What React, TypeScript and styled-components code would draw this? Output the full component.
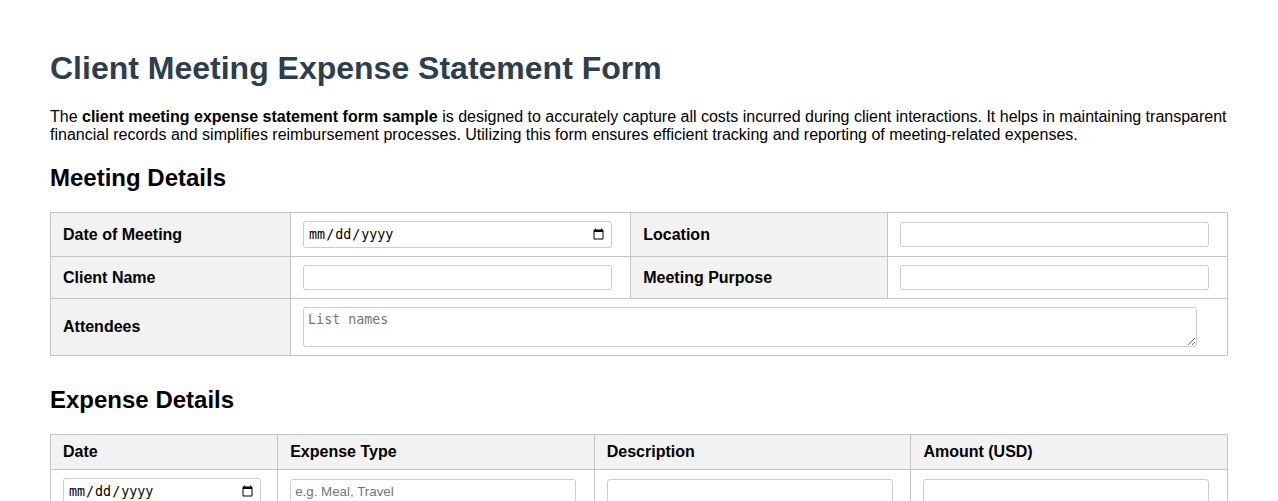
import React from "react";
import styled, { createGlobalStyle } from "styled-components";

const Global = createGlobalStyle`
  html, body { margin: 0; padding: 0; background: #fff; }
  body {
    font-family: "Liberation Sans", Arial, sans-serif;
    color: #000;
    padding: 50px;
  }
`;

const Title = styled.h1`
  font-size: 32px;
  font-weight: bold;
  color: #2c3e50;
  margin: 0 0 21px;
`;

const Intro = styled.p`
  font-size: 16px;
  margin: 0 0 20px;
`;

const SectionTitle = styled.h2`
  font-size: 24px;
  font-weight: bold;
  margin: 20px 0 20px;
`;

const Table = styled.table`
  width: 100%;
  border-collapse: collapse;
  table-layout: fixed;
  margin-bottom: 30px;
  font-size: 16px;
`;

const Label = styled.th`
  background: #f2f2f2;
  border: 1px solid #c4c4c4;
  padding: 8px 12px;
  text-align: left;
  font-weight: bold;
`;

const Cell = styled.td`
  border: 1px solid #c4c4c4;
  padding: 8px 12px;
`;

const Field = styled.input<{ $tall?: boolean }>`
  width: 98%;
  box-sizing: border-box;
  border: 1px solid #ccc;
  border-radius: 3px;
  padding: 4px;
  height: ${(p) => (p.$tall ? "27px" : "auto")};
  vertical-align: middle;
`;

const Area = styled.textarea`
  display: block;
  width: 98%;
  box-sizing: border-box;
  border: 1px solid #ccc;
  border-radius: 3px;
  padding: 4px;
  height: 40px;
`;

const expenseRows = [0, 1, 2, 3, 4];

export default function App() {
  return (
    <>
      <Global />
      <Title>Client Meeting Expense Statement Form</Title>
      <Intro>
        The <strong>client meeting expense statement form sample</strong> is designed to accurately
        capture all costs incurred during client interactions. It helps in maintaining transparent
        financial records and simplifies reimbursement processes. Utilizing this form ensures
        efficient tracking and reporting of meeting-related expenses.
      </Intro>

      <SectionTitle>Meeting Details</SectionTitle>
      <Table>
        <colgroup>
          <col style={{ width: "20.4%" }} />
          <col style={{ width: "28.9%" }} />
          <col style={{ width: "21.8%" }} />
          <col style={{ width: "28.9%" }} />
        </colgroup>
        <tbody>
          <tr>
            <Label>Date of Meeting</Label>
            <Cell><Field type="date" $tall /></Cell>
            <Label>Location</Label>
            <Cell><Field type="text" /></Cell>
          </tr>
          <tr>
            <Label>Client Name</Label>
            <Cell><Field type="text" /></Cell>
            <Label>Meeting Purpose</Label>
            <Cell><Field type="text" /></Cell>
          </tr>
          <tr>
            <Label>Attendees</Label>
            <Cell colSpan={3}><Area placeholder="List names" /></Cell>
          </tr>
        </tbody>
      </Table>

      <SectionTitle>Expense Details</SectionTitle>
      <Table>
        <colgroup>
          <col style={{ width: "19.3%" }} />
          <col style={{ width: "26.9%" }} />
          <col style={{ width: "26.9%" }} />
          <col style={{ width: "26.9%" }} />
        </colgroup>
        <thead>
          <tr>
            <Label>Date</Label>
            <Label>Expense Type</Label>
            <Label>Description</Label>
            <Label>Amount (USD)</Label>
          </tr>
        </thead>
        <tbody>
          {expenseRows.map((r) => (
            <tr key={r}>
              <Cell><Field type="date" $tall /></Cell>
              <Cell><Field type="text" placeholder="e.g. Meal, Travel" /></Cell>
              <Cell><Field type="text" /></Cell>
              <Cell><Field type="number" /></Cell>
            </tr>
          ))}
          <tr>
            <Label colSpan={3}>Total</Label>
            <Cell><Field type="number" /></Cell>
          </tr>
        </tbody>
      </Table>
    </>
  );
}
